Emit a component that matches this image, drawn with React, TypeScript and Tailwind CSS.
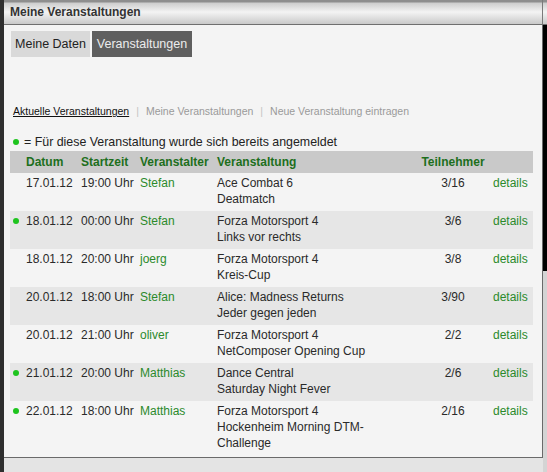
import React from "react";

type Event = {
  booked: boolean;
  date: string;
  time: string;
  host: string;
  title: string[];
  seats: string;
};

const EVENTS: Event[] = [
  { booked: false, date: "17.01.12", time: "19:00 Uhr", host: "Stefan", title: ["Ace Combat 6", "Deatmatch"], seats: "3/16" },
  { booked: true, date: "18.01.12", time: "00:00 Uhr", host: "Stefan", title: ["Forza Motorsport 4", "Links vor rechts"], seats: "3/6" },
  { booked: false, date: "18.01.12", time: "20:00 Uhr", host: "joerg", title: ["Forza Motorsport 4", "Kreis-Cup"], seats: "3/8" },
  { booked: false, date: "20.01.12", time: "18:00 Uhr", host: "Stefan", title: ["Alice: Madness Returns", "Jeder gegen jeden"], seats: "3/90" },
  { booked: false, date: "20.01.12", time: "21:00 Uhr", host: "oliver", title: ["Forza Motorsport 4", "NetComposer Opening Cup"], seats: "2/2" },
  { booked: true, date: "21.01.12", time: "20:00 Uhr", host: "Matthias", title: ["Dance Central", "Saturday Night Fever"], seats: "2/6" },
  { booked: true, date: "22.01.12", time: "18:00 Uhr", host: "Matthias", title: ["Forza Motorsport 4", "Hockenheim Morning DTM-", "Challenge"], seats: "2/16" },
];

// dot | Datum | Startzeit | Veranstalter | Veranstaltung | Teilnehmer | details
const COLS = "grid grid-cols-[16px_55px_59px_77px_201px_70px_1fr]";

function Dot() {
  return <span className="block h-[6px] w-[6px] rounded-full bg-[#1ec41e]" />;
}

export default function App() {
  return (
    <div className="flex h-[472px] w-[547px] overflow-hidden bg-[#e4e4e4] font-['Liberation_Sans',Arial,sans-serif]">
      {/* left dark strip */}
      <div className="w-[4px] shrink-0 bg-[#2e2e2e]" />

      <div className="flex flex-1 flex-col">
        {/* Title bar */}
        <div className="flex h-[25px] shrink-0 border-b border-[#6f6f6f] bg-[linear-gradient(to_bottom,#8e8e8e_0px,#8e8e8e_2px,#cdcdcd_3px,#f3f3f3_12px,#c9c9c9_24px)]">
          <div className="flex w-[539px] items-center border-r border-[#7a7a7a] pl-[6px] text-[12px] font-bold text-[#333]">
            Meine Veranstaltungen
          </div>
          <div className="flex-1" />
        </div>

        <div className="flex flex-1">
          {/* Panel */}
          <div className="flex h-[433px] w-[539px] flex-col border-r border-b border-[#6a6a6a] bg-[#f4f4f4]">
            {/* Tabs */}
            <div className="ml-[7px] mt-[6px] flex gap-[2px] text-[12.5px]">
              <div className="flex h-[26px] w-[79px] items-center justify-center bg-[#d9d9d9] text-[#222]">
                Meine Daten
              </div>
              <div className="flex h-[26px] w-[100px] items-center justify-center bg-[#5f5f5f] text-[#ececec]">
                Veranstaltungen
              </div>
            </div>

            {/* Sub navigation */}
            <div className="ml-[9px] mt-[47px] flex items-center gap-[7px] text-[10.5px] leading-[14px]">
              <span className="text-[#111] underline">Aktuelle Veranstaltungen</span>
              <span className="text-[#c4c4c4]">|</span>
              <span className="text-[#9a9a9a]">Meine Veranstaltungen</span>
              <span className="text-[#c4c4c4]">|</span>
              <span className="text-[#9a9a9a]">Neue Veranstaltung eintragen</span>
            </div>

            {/* Legend */}
            <div className="ml-[9px] mt-[16px] flex items-center gap-[5px] text-[12.4px] leading-[16px] text-[#222]">
              <Dot />
              <span>= Für diese Veranstaltung wurde sich bereits angemeldet</span>
            </div>

            {/* Table */}
            <div className="ml-[6px] mt-[1px] w-[523px] text-[12px] leading-[16px]">
              <div className={`${COLS} h-[22px] items-center bg-[#c9c9c9] font-bold text-[#1d6f1d]`}>
                <span />
                <span>Datum</span>
                <span>Startzeit</span>
                <span>Veranstalter</span>
                <span>Veranstaltung</span>
                <span className="text-center">Teilnehmer</span>
                <span />
              </div>

              {EVENTS.map((ev, i) => (
                <div
                  key={i}
                  className={`${COLS} pt-[2px] pb-[4px] text-[#2a2a2a] ${i % 2 === 1 ? "bg-[#e6e6e6]" : ""}`}
                >
                  <div className="flex h-[16px] items-center pl-[3px]">{ev.booked && <Dot />}</div>
                  <span>{ev.date}</span>
                  <span>{ev.time}</span>
                  <span className="text-[#2b8a2b]">{ev.host}</span>
                  <div className="flex flex-col">
                    {ev.title.map((t) => (
                      <span key={t}>{t}</span>
                    ))}
                  </div>
                  <span className="text-center">{ev.seats}</span>
                  <span className="pl-[5px] text-[#2b8a2b]">details</span>
                </div>
              ))}
            </div>
          </div>

          {/* right strip */}
          <div className="flex flex-1 flex-col">
            <div className="h-[246px] bg-black" />
            <div className="flex-1 bg-[#d4d4d4]" />
          </div>
        </div>
      </div>
    </div>
  );
}
